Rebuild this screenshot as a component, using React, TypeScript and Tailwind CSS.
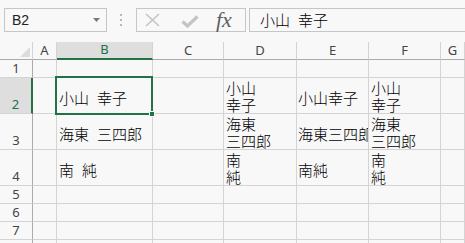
import React from 'react';

type CellValue = { text: string; wrap?: boolean; tight?: boolean };

const columns = ['A', 'B', 'C', 'D', 'E', 'F', 'G'];

// row heights follow the sheet (rows 2-4 are double height)
const rows: { num: number; cells: Record<string, CellValue> }[] = [
  { num: 1, cells: {} },
  {
    num: 2,
    cells: {
      B: { text: '小山　幸子' },
      D: { text: '小山\n幸子', wrap: true },
      E: { text: '小山幸子', tight: true },
      F: { text: '小山\n幸子', wrap: true },
    },
  },
  {
    num: 3,
    cells: {
      B: { text: '海東　三四郎' },
      D: { text: '海東\n三四郎', wrap: true },
      E: { text: '海東三四郎', tight: true },
      F: { text: '海東\n三四郎', wrap: true },
    },
  },
  {
    num: 4,
    cells: {
      B: { text: '南　純' },
      D: { text: '南\n純', wrap: true },
      E: { text: '南純', tight: true },
      F: { text: '南\n純', wrap: true },
    },
  },
  { num: 5, cells: {} },
  { num: 6, cells: {} },
  { num: 7, cells: {} },
  { num: 8, cells: {} },
];

function NameText({ text }: { text: string }) {
  const parts = text.split('　');
  return (
    <>
      {parts.map((p, i) => (
        <React.Fragment key={i}>
          {i > 0 && <span className="tracking-[-7px]">　</span>}
          {p}
        </React.Fragment>
      ))}
    </>
  );
}

function Cell({ value }: { value?: CellValue }) {
  if (!value) {
    return <div className="border-r border-b border-[#d4d4d4]" />;
  }
  if (value.wrap) {
    return (
      <div className="flex items-end overflow-hidden border-r border-b border-[#d4d4d4] pl-[2px] font-['Noto_Sans_CJK_JP',sans-serif] text-[15px] leading-[17px] font-light whitespace-pre-line text-black">
        {value.text}
      </div>
    );
  }
  return (
    <div
      className={`flex items-center overflow-hidden border-r border-b border-[#d4d4d4] pt-[3px] font-['Noto_Sans_CJK_JP',sans-serif] text-[15px] leading-[17px] font-light whitespace-nowrap text-black ${
        value.tight ? 'pl-[1px]' : 'pl-[2px]'
      }`}
    >
      <span>
        <NameText text={value.text} />
      </span>
    </div>
  );
}

function FormulaBar() {
  return (
    <div className="flex h-[42px] items-start overflow-hidden pt-[8px]">
      {/* Name box */}
      <div className="ml-[4px] flex h-[24px] w-[103px] shrink-0 items-center justify-between border border-[#c6c6c6] pr-[6px] pl-[7px]">
        <span className="font-['Liberation_Sans',sans-serif] text-[14px] text-[#222]">B2</span>
        <svg width="7" height="4" viewBox="0 0 7 4">
          <path d="M0 0 L7 0 L3.5 4 Z" fill="#7a7a7a" />
        </svg>
      </div>

      {/* Grip dots */}
      <div className="ml-[13px] flex h-[24px] w-[2px] shrink-0 flex-col items-center justify-center gap-[3px]">
        <span className="h-[2px] w-[2px] bg-[#b8b8b8]" />
        <span className="h-[2px] w-[2px] bg-[#b8b8b8]" />
        <span className="h-[2px] w-[2px] bg-[#b8b8b8]" />
      </div>

      {/* Cancel / enter / fx */}
      <div className="ml-[14px] flex h-[24px] w-[110px] shrink-0 items-center border border-[#c6c6c6]">
        <svg className="ml-[8px]" width="15" height="14" viewBox="0 0 15 14">
          <path d="M1 1 L14 13 M14 1 L1 13" stroke="#c4c4c4" strokeWidth="1.6" fill="none" />
        </svg>
        <svg className="mt-[3px] ml-[21px]" width="18" height="13" viewBox="0 0 18 13">
          <path d="M1.5 6.5 L6.5 11 L16.5 1.5" stroke="#c4c4c4" strokeWidth="3.2" fill="none" />
        </svg>
        <span className="ml-[17px] font-['Liberation_Serif',serif] text-[22px] leading-none text-[#5f5f5f] italic">
          fx
        </span>
      </div>

      {/* Formula input */}
      <div className="ml-[3px] flex h-[24px] w-[240px] shrink-0 items-center border border-[#c6c6c6] pl-[10px] font-['Noto_Sans_CJK_JP',sans-serif] text-[15px] font-light text-black">
        <NameText text="小山　幸子" />
      </div>
    </div>
  );
}

export default function App() {
  return (
    <div className="h-[243px] w-[465px] overflow-hidden bg-[#f8f8f8]">
      <FormulaBar />

      <div className="relative grid grid-cols-[33px_24px_96px_71px_73px_72px_72px_1fr] grid-rows-[18px_18px_36px_36px_36px_18px_18px_18px_18px]">
        {/* Corner */}
        <div className="flex items-end justify-end border-r border-b border-r-[#d4d4d4] border-b-[#ababab] pr-[2px] pb-[2px]">
          <svg width="10" height="10" viewBox="0 0 10 10">
            <path d="M10 0 L10 10 L0 10 Z" fill="#dcdcdc" />
          </svg>
        </div>

        {/* Column headers */}
        {columns.map((c) => (
          <div
            key={c}
            className={`flex items-center justify-center border-r border-r-[#d4d4d4] font-['Noto_Sans',sans-serif] text-[13px] ${
              c === 'B'
                ? 'border-b-2 border-b-[#217346] bg-[#dedede] text-[#217346]'
                : 'border-b border-b-[#ababab] text-[#444]'
            }`}
          >
            {c}
          </div>
        ))}

        {rows.map((row) => (
          <React.Fragment key={row.num}>
            <div
              className={`flex items-end justify-center border-b border-b-[#d4d4d4] pb-[1px] font-['Noto_Sans',sans-serif] text-[13px] leading-[15px] ${
                row.num === 2
                  ? 'border-r-2 border-r-[#217346] bg-[#dedede] text-[#217346]'
                  : 'border-r border-r-[#ababab] text-[#444]'
              }`}
            >
              {row.num}
            </div>
            {columns.map((c) => (
              <Cell key={c} value={row.cells[c]} />
            ))}
          </React.Fragment>
        ))}

        {/* Active cell B2 */}
        <div className="pointer-events-none absolute top-[34px] left-[55px] h-[39px] w-[98px] border-2 border-[#217346]">
          <div className="absolute right-[-4px] bottom-[-4px] h-[6px] w-[6px] border border-[#f8f8f8] bg-[#217346]" />
        </div>
      </div>
    </div>
  );
}
